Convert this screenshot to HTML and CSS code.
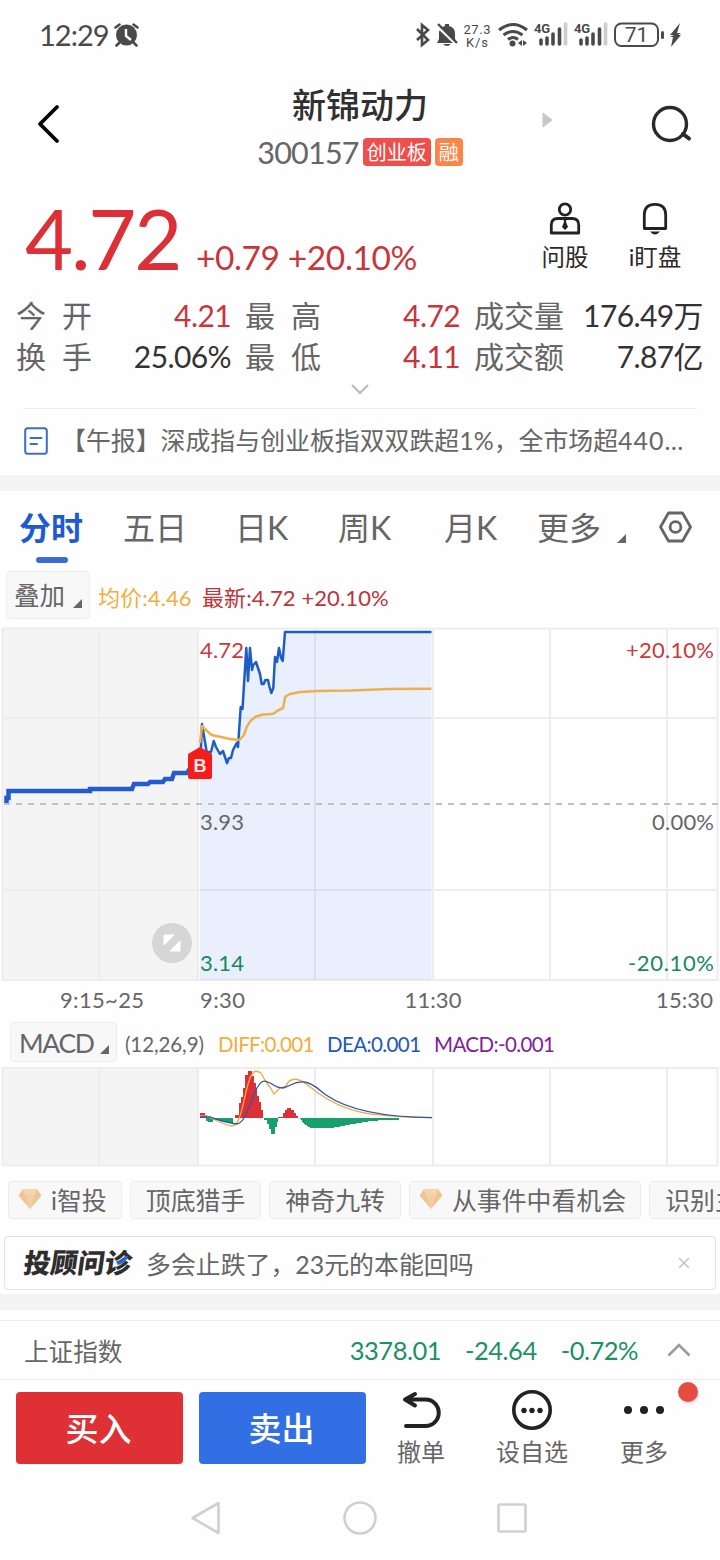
FILE: index.html
```html
<!DOCTYPE html>
<html lang="zh-CN">
<head>
    <meta charset="UTF-8">
    <meta name="viewport" content="width=device-width, initial-scale=1.0">
    <title>新锦动力 300157</title>
    <link rel="stylesheet" href="styles.css">
</head>
<body>
    <div class="status-bar">
        <span class="clock">12:29</span>
        <svg class="alarm" width="25" height="24" viewBox="0 0 25 24">
            <circle cx="12.500" cy="12" r="10.500" fill="#4a4a4a"/>
            <path d="M1.500 4.500 5.500 1.500M23.500 4.500l-4-3M5 20l-2.500 2.500M20 20l2.500 2.500" stroke="#4a4a4a" stroke-width="2.600" stroke-linecap="round"/>
            <path d="M12 6v7l5 4" fill="none" stroke="#fff" stroke-width="2.400"/>
        </svg>
        <div class="status-icons">
            <svg width="262" height="26" viewBox="0 0 262 26" fill="#4a4a4a">
                <path d="M2 7l11 11-6 5V3l6 5L2 18" fill="none" stroke="#4a4a4a" stroke-width="2.600"/>
                <path d="M24 17v-7q1-5 6-6V2h4v2q6 1 6 8v5l2 4H22zM28 22h8q-4 4-8 0z"/>
                <path d="M21 3l20 19" stroke="#fff" stroke-width="3"/>
                <path d="M23 2l19 19" stroke="#4a4a4a" stroke-width="2.400"/>
                <text class="net" x="62" y="11.500" text-anchor="middle" textLength="27">27.3</text>
                <text class="net" x="62" y="24.500" text-anchor="middle" textLength="22">K/s</text>
                <g fill="none" stroke="#4a4a4a" stroke-width="3">
                    <path d="M84 8q14-11 28 0M88.500 13q9.500-7 19 0M93 17.500q5-4 10 0"/>
                </g>
                <circle cx="97.500" cy="21.500" r="3"/>
                <path d="M103 21l4-3v6zM112 21l-4-3v6z"/>
                <g id="signal">
                    <text class="lte" x="119" y="11" textLength="16">4G</text>
                    <path d="M126 18v4M132 16v6M138 12v10M144.500 7v15" stroke="#4a4a4a" stroke-width="3.600" stroke-linecap="round"/>
                    <path d="M150.500 2v20" stroke="#ccc" stroke-width="3.600" stroke-linecap="round"/>
                </g>
                <use href="#signal" x="40"/>
                <rect x="200" y="1.500" width="43" height="22.500" rx="6.500" fill="none" stroke="#4a4a4a" stroke-width="2"/>
                <text class="battery" x="221.500" y="20" text-anchor="middle">71</text>
                <rect x="246" y="9" width="3" height="8" rx="1.500"/>
                <path d="M265 1l-10 12h4l-4 2h3l-2 10 10-12h-3l3-2h-4z"/>
            </svg>
        </div>
    </div>

    <div class="header">
        <svg class="back" width="24" height="40" viewBox="0 0 24 40"><path d="M21 3 4 20l17 17" fill="none" stroke="#000" stroke-width="3.800" stroke-linecap="round" stroke-linejoin="round"/></svg>
        <div class="stock">
            <h1>新锦动力</h1>
            <div class="code-row">
                <span class="code">300157</span>
                <span class="tag tag-red">创业板</span>
                <span class="tag tag-orange">融</span>
            </div>
        </div>
        <svg class="next" width="11" height="16" viewBox="0 0 11 16"><path d="M1 1v14l9-7z" fill="#c8c8c8" stroke="#c8c8c8" stroke-linejoin="round"/></svg>
        <svg class="search" width="42" height="40" viewBox="0 0 42 40"><circle cx="20" cy="20" r="16.500" fill="none" stroke="#2a2a2a" stroke-width="3.400"/><path d="M33 30l6 4.500" stroke="#2a2a2a" stroke-width="4" stroke-linecap="round"/></svg>
    </div>

    <div class="quote">
        <span class="price">4.72</span>
        <span class="change">+0.79 +20.10%</span>
        <div class="quick">
            <svg width="32" height="34" viewBox="0 0 32 34" fill="none" stroke="#222" stroke-width="2.800">
                <circle cx="16" cy="7.500" r="5.700"/>
                <path d="M2.300 31V23q0-6.500 6.500-6.500h14.400q6.500 0 6.500 6.500v8z" stroke-linejoin="round"/>
                <path d="M14.500 17h3l-.5 3 2 5-3 3-3-3 2-5z" fill="#222" stroke="none"/>
            </svg>
            <span>问股</span>
        </div>
        <div class="quick">
            <svg width="32" height="34" viewBox="0 0 32 34" fill="none" stroke="#222" stroke-width="2.800">
                <path d="M5.300 26.500V13q0-10.700 10.700-10.700T26.700 13v13.500z" stroke-linejoin="round"/>
                <path d="M11 29.500h10q-5 6-10 0z" fill="#222" stroke="none"/>
            </svg>
            <span>i盯盘</span>
        </div>
    </div>

    <div class="stats">
        <span class="label">今<i></i>开</span><span class="num red">4.21</span>
        <span class="label mid">最<i></i>高</span><span class="num red">4.72</span>
        <span class="label mid">成交量</span><span class="num">176.49万</span>
        <span class="label">换<i></i>手</span><span class="num">25.06%</span>
        <span class="label mid">最<i></i>低</span><span class="num red">4.11</span>
        <span class="label mid">成交额</span><span class="num">7.87亿</span>
    </div>
    <div class="expand">
        <svg width="20" height="11" viewBox="0 0 20 11"><path d="M2 1l8 8 8-8" fill="none" stroke="#bbb" stroke-width="2"/></svg>
    </div>

    <div class="news">
        <svg width="24" height="28" viewBox="0 0 24 28" fill="none" stroke="#3a6fc9" stroke-width="2"><rect x="1.200" y="1.200" width="21.600" height="25.600" rx="2.500"/><path d="M6.500 11h11M6.500 17h6.500" stroke-linecap="round"/></svg>
        <span class="news-text">【午报】深成指与创业板指双双跌超1%，全市场超<b>440…</b></span>
    </div>
    <div class="band"></div>

    <div class="tabs">
        <span class="tab active">分时</span>
        <span class="tab">五日</span>
        <span class="tab">日K</span>
        <span class="tab">周K</span>
        <span class="tab">月K</span>
        <span class="tab">更多</span>
        <svg class="corner" width="9" height="9" viewBox="0 0 9 9"><path d="M9 0v9H0z" fill="#666"/></svg>
        <svg width="34" height="32" viewBox="0 0 34 32" fill="none" stroke="#666" stroke-width="2.800"><path d="M9.500 2h14L31.500 16l-8 14h-14L1.500 16z" stroke-linejoin="round"/><circle cx="16.500" cy="16" r="5.400"/></svg>
    </div>

    <div class="legend">
        <span class="select">叠加<svg width="9" height="9" viewBox="0 0 9 9"><path d="M9 0v9H0z" fill="#666"/></svg></span>
        <span class="avg">均价:4.46</span>
        <span class="last">最新:4.72 +20.10%</span>
    </div>

    <!-- intraday price chart -->
    <svg class="chart" width="720" height="395" viewBox="0 627 720 395">
        <rect x="2" y="628" width="196" height="352" fill="#f4f4f4"/>
        <g class="grid">
            <path d="M2 628.500H718M2 980H718M4 718H718M4 890H718"/>
            <path d="M2.500 628v352M99 628v352M198 628v352M315 628v352M433 628v352M550 628v352M667 628v352M717.500 628v352"/>
        </g>
        <path class="area" d="M200 980V767L202 724 206.700 752 211 752 213.700 741 216 747 220 754 223 751 227 763 229 758 231 758 233 750 236.700 743 238 747 240.700 707 242.500 709 246.300 648 248 681 250 648 252 670 253.300 665 256 662 258 668 260 674 261.700 684 263.700 684 265.300 680 268 680 269.300 686 271.300 693 273.300 688 275 657 277 662 279 648 281 658 282.700 661 285 632H431.500V980z"/>
        <path class="dash" d="M4 804H718"/>
        <path class="pre" d="M6.500 803v-5h2v-7H90v-2h42l2-5h14l2-2h13l2-3h7l2-6h13l2-3h6"/>
        <text class="axis red" x="200" y="658" textLength="44">4.72</text>
        <text class="axis gray" x="200" y="830" textLength="44">3.93</text>
        <text class="axis green" x="200" y="971" textLength="44">3.14</text>
        <text class="axis red" x="714" y="658" text-anchor="end" textLength="88">+20.10%</text>
        <text class="axis gray" x="714" y="830" text-anchor="end" textLength="62">0.00%</text>
        <text class="axis green" x="714" y="971" text-anchor="end" textLength="86">-20.10%</text>
        <path class="line" d="M200 767L202 724 206.700 752 211 752 213.700 741 216 747 220 754 223 751 227 763 229 758 231 758 233 750 236.700 743 238 747 240.700 707 242.500 709 246.300 648 248 681 250 648 252 670 253.300 665 256 662 258 668 260 674 261.700 684 263.700 684 265.300 680 268 680 269.300 686 271.300 693 273.300 688 275 657 277 662 279 648 281 658 282.700 661 285 632H431.500"/>
        <path class="avg-line" d="M200 743L202 726 207 731 211.700 735 220 736.700 230 739 239.300 740 244 735 246.700 727 250.700 720.700 255 717 261.700 714.700 273.300 713.700 279 709.700 283 708.300 285.300 696.700 290 694 300 692 316.700 691 350 690.500 390 689 431.500 688.700"/>
        <path d="M188 754l12-7 12 7v23q0 2-2 2h-20q-2 0-2-2z" fill="#f71c1c"/>
        <text class="buy-mark" x="200" y="772" text-anchor="middle">B</text>
        <circle cx="172" cy="943" r="20" fill="#d6d6d6"/>
        <path d="M164 935h10l-10 10zM180 941v10h-10z" fill="#fff" stroke="#fff" stroke-linejoin="round"/>
        <text class="axis gray" x="60" y="1008" textLength="84">9:15~25</text>
        <text class="axis gray" x="200" y="1008" textLength="45">9:30</text>
        <text class="axis gray" x="433" y="1008" text-anchor="middle" textLength="57">11:30</text>
        <text class="axis gray" x="713" y="1008" text-anchor="end" textLength="57">15:30</text>
    </svg>

    <div class="macd-legend">
        <span class="select">MACD<svg width="9" height="9" viewBox="0 0 9 9"><path d="M9 0v9H0z" fill="#666"/></svg></span>
        <span class="params">(12,26,9)</span>
        <span class="diff">DIFF:0.001</span>
        <span class="dea">DEA:0.001</span>
        <span class="macd">MACD:-0.001</span>
    </div>

    <svg class="chart" width="720" height="100" viewBox="0 1067 720 100">
        <rect x="2" y="1068" width="196" height="98" fill="#f4f4f4"/>
        <g class="grid">
            <path d="M2 1068H718M2 1165.500H718"/>
            <path d="M2.500 1068v98M99 1068v98M198 1068v98M315 1068v98M433 1068v98M550 1068v98M667 1068v98M717.500 1068v98"/>
        </g>
        <g shape-rendering="crispEdges">
            <path fill="#dd3036" d="M200 1118v-5h5v2h2v3zM235 1118v-3h4v-12h2v-6h2v-9h2v-13h3v-4h4v5h2v7h2v6h1v7h2v6h2v8h2V1118zM278 1118v-1h5v-4h2v-3h2v-2h4v2h3v3h2v3h2v2z"/>
            <path fill="#18a06c" d="M206 1118v3h2v1h5v-2h6v1h6v1h6v1h2v-5zM264 1118v2h3v4h2v5h2v5h4v-7h2v-5h1v-4zM300 1118v1l2 1v2l4 3 5 3h19l8-1 9-2 12-2 12-2 14-1h14v-2z"/>
        </g>
        <path class="macd-line orange" d="M200 1116L206 1116 213 1119 222 1123 231 1126C240 1126 242 1108 247 1088S256 1070 261 1073L266 1082 270 1087 274 1094 280 1088 286 1086C290 1076 299 1079 305 1083L318 1093C345 1112 367 1117 432 1117.700"/>
        <path class="macd-line blue" d="M200 1117L210 1117 222 1121 236 1124C245 1124 249 1105 255 1092S264 1080 270 1083 276 1088 283 1088C291 1086 294 1081 304 1082S320 1091 326 1095 355 1117 432 1117.700"/>
    </svg>

    <div class="chips">
        <span class="chip chip-gem"><svg width="24" height="22" viewBox="0 0 24 22"><path d="M5 1h14l4.500 6.500L12 21 .5 7.500z" fill="#efc495"/><path d="M5 1l2 6.500h10L19 1z" fill="#f6d4ad"/><path d="M7 7.500h10L12 21z" fill="#f3cea4"/></svg>i智投</span>
        <span class="chip">顶底猎手</span>
        <span class="chip">神奇九转</span>
        <span class="chip chip-gem"><svg width="24" height="22" viewBox="0 0 24 22"><path d="M5 1h14l4.500 6.500L12 21 .5 7.500z" fill="#efc495"/><path d="M5 1l2 6.500h10L19 1z" fill="#f6d4ad"/><path d="M7 7.500h10L12 21z" fill="#f3cea4"/></svg>从事件中看机会</span>
        <span class="chip">识别主</span>
    </div>

    <div class="advisor">
        <span class="advisor-logo">投顾问诊<svg width="14" height="12" viewBox="0 0 14 12"><path d="M1 7l4-1 4-5h3l-1 4-3 3-5 2z" fill="#2866e0"/></svg></span>
        <span class="advisor-text">多会止跌了，23元的本能回吗</span>
        <svg width="12" height="12" viewBox="0 0 12 12"><path d="M1 1l10 10M11 1 1 11" stroke="#c4c4c4" stroke-width="1.600"/></svg>
    </div>
    <div class="band"></div>

    <div class="index-bar">
        <span class="index-name">上证指数</span>
        <span class="index-num">3378.01</span>
        <span class="index-num">-24.64</span>
        <span class="index-num">-0.72%</span>
        <svg width="24" height="14" viewBox="0 0 24 14"><path d="M1.500 12.500 12 2l10.500 10.500" fill="none" stroke="#999" stroke-width="2.600"/></svg>
    </div>

    <div class="actions">
        <span class="trade buy">买入</span>
        <span class="trade sell">卖出</span>
        <div class="action">
            <svg width="40" height="40" viewBox="0 0 40 40" fill="none" stroke="#222" stroke-width="4" stroke-linecap="round" stroke-linejoin="round"><path d="M14 4 4 9.500l10 6M5 9.500h19.500a13 13 0 0 1 0 26.500H5"/></svg>
            <span>撤单</span>
        </div>
        <div class="action">
            <svg width="40" height="40" viewBox="0 0 40 40" fill="#222"><circle cx="20" cy="20" r="18.200" fill="none" stroke="#222" stroke-width="3.600"/><circle cx="12" cy="20.500" r="2.700"/><circle cx="20" cy="20.500" r="2.700"/><circle cx="28" cy="20.500" r="2.700"/></svg>
            <span>设自选</span>
        </div>
        <div class="action">
            <svg width="40" height="40" viewBox="0 0 40 40" fill="#222"><circle cx="4" cy="20" r="4"/><circle cx="20" cy="20" r="4"/><circle cx="36" cy="20" r="4"/></svg>
            <span>更多</span>
            <i class="dot"></i>
        </div>
    </div>

    <div class="nav-bar">
        <svg width="34" height="36" viewBox="0 0 34 36"><path d="M27.500 3v30L1.500 18z"/></svg>
        <svg width="34" height="36" viewBox="0 0 34 36"><circle cx="17" cy="18" r="15.500"/></svg>
        <svg width="34" height="36" viewBox="0 0 34 36"><rect x="3.500" y="4.500" width="27" height="27" rx="1"/></svg>
    </div>
</body>
</html>
```

FILE: styles.css
```css
* {
    box-sizing: border-box;
}
body {
    margin: 0;
    width: 720px;
    height: 1560px;
    overflow: hidden;
    background-color: #fefefe;
    color: #666;
    font-family: Lato, "Noto Sans CJK SC", sans-serif;
    white-space: nowrap;
}
svg {
    display: block;
    flex: none;
}
.red {
    color: #cf3238;
    fill: #c83a40;
}
.gray {
    fill: #666;
}
.green {
    fill: #168a5c;
}

/* status bar */
.status-bar {
    display: flex;
    align-items: center;
    height: 70px;
    padding: 0 36px 0 39px;
    color: #4a4a4a;
}
.clock {
    width: 75px;
    font-size: 29px;
    line-height: 40px;
    letter-spacing: -1px;
}
.status-icons {
    margin-left: auto;
    margin-right: 7px;
}
.status-icons svg {
    overflow: visible;
}
.net {
    font: 13px Roboto, sans-serif;
}
.lte {
    font: bold 13px Roboto, sans-serif;
}
.battery {
    font: 21px Roboto, sans-serif;
    font-kerning: none;
}

/* title */
.header {
    display: grid;
    grid-template-columns: 24px 1fr 42px;
    height: 118px;
    padding: 14px 28px 0 36px;
    position: relative;
}
.back, .search {
    margin-top: 20px;
}
.stock {
    padding-left: 12px;
    text-align: center;
}
.stock h1 {
    margin: 0;
    padding-right: 2px;
    font-size: 34px;
    font-weight: 500;
    line-height: 41px;
    color: #303030;
}
.code-row {
    display: flex;
    justify-content: center;
    align-items: center;
    gap: 4px;
    height: 54px;
    padding-right: 2px;
}
.code {
    font-size: 30.5px;
    letter-spacing: -0.8px;
}
.tag {
    height: 28px;
    padding: 0 4px;
    border-radius: 4px;
    font-size: 20px;
    line-height: 28px;
    color: #fff;
}
.tag-red {
    background-color: #f04e4b;
}
.tag-orange {
    background-color: #fb8549;
}
.next {
    position: absolute;
    left: 542px;
    top: 42px;
}

/* price */
.quote {
    display: flex;
    height: 107px;
    padding-left: 25px;
}
.price {
    width: 171px;
    font-size: 83px;
    line-height: 101px;
    letter-spacing: -2.2px;
    color: #dd3036;
}
.change {
    width: 324px;
    padding-top: 47px;
    font-size: 33.5px;
    line-height: 44px;
    letter-spacing: -0.4px;
    color: #c9353b;
}
.quick {
    display: flex;
    flex-direction: column;
    align-items: center;
    width: 90px;
    padding-top: 14px;
    font-size: 23.5px;
    line-height: 42px;
    color: #2a2a2a;
}

/* day figures */
.stats {
    display: grid;
    grid-template-columns: 76px 139px 91px 138px 104px 1fr;
    grid-auto-rows: 41px;
    padding: 0 17px 0 16px;
    font-size: 30px;
    line-height: 40px;
}
.label i {
    display: inline-block;
    width: 16px;
}
.mid {
    padding-left: 14px;
}
.num {
    text-align: right;
    letter-spacing: -0.6px;
    color: #333;
}
.num.red {
    color: #c9353b;
}
.expand {
    display: flex;
    justify-content: center;
    height: 31px;
    margin: 0 23px;
    padding-top: 7px;
}

/* news */
.news {
    display: flex;
    align-items: center;
    gap: 13px;
    height: 67px;
    margin: 0 23px;
    padding-left: 1px;
    border-top: 1px solid #ededed;
}
.news-text {
    margin-top: -4px;
    font-size: 24.9px;
    line-height: 36px;
}
.news-text b {
    font-weight: normal;
    letter-spacing: 1px;
}
.news svg {
    margin-top: -2px;
}
.band {
    height: 16px;
    background-color: #f4f4f4;
}

/* chart tabs */
.tabs {
    display: grid;
    grid-template-columns: 104px 112px 103px 106px 93px 80px 42px 34px;
    height: 80px;
    padding: 12px 0 0 19px;
    font-size: 32px;
    line-height: 50px;
}
.tabs > svg {
    margin-top: 8px;
}
.tabs > .corner {
    margin-top: 31px;
}
.active {
    color: #1f5bd0;
    font-weight: bold;
}
.active::after {
    content: "";
    display: block;
    width: 32px;
    height: 6px;
    margin: 4px 0 0 17px;
    border-radius: 3px;
    background-color: #3a6cda;
}
.legend, .macd-legend {
    display: flex;
    align-items: center;
    font-size: 22px;
}
.legend {
    height: 48px;
    padding-left: 6px;
    margin-bottom: 8px;
}
.select {
    display: flex;
    justify-content: space-between;
    align-items: center;
    border: 1px solid #ededed;
    border-radius: 4px;
    background-color: #f8f8f8;
    font-size: 25.5px;
}
.select svg {
    margin-top: 14px;
}
.legend .select {
    width: 84px;
    height: 48px;
    padding: 0 7px 3px;
}
.legend .select svg {
    margin-top: 20px;
}
.avg, .last {
    padding-top: 2px;
    letter-spacing: 0.1px;
}
.avg {
    width: 104px;
    margin-left: 8px;
    color: #efae3d;
}
.last {
    color: #bd3439;
}

/* charts */
.grid path {
    fill: none;
    stroke: #ededed;
    stroke-width: 2;
}
.area {
    fill: #3c78f8;
    fill-opacity: 0.11;
}
.dash {
    stroke: #bfc1c4;
    stroke-width: 2;
    stroke-dasharray: 6 6;
}
.line {
    fill: none;
    stroke: #1f5dc6;
    stroke-width: 2.5;
    stroke-linejoin: round;
}
.pre {
    fill: none;
    stroke: #245bce;
    stroke-width: 4.5;
}
.avg-line {
    fill: none;
    stroke: #ecb04c;
    stroke-width: 2.5;
    stroke-linejoin: round;
}
.axis {
    font-size: 22px;
}
.buy-mark {
    font: bold 18px "Liberation Sans", sans-serif;
    fill: #ffe9e9;
}
.macd-legend {
    height: 40px;
    margin-bottom: 5px;
    padding-left: 10px;
    font-size: 20.5px;
    letter-spacing: -0.6px;
}
.macd-legend .select {
    width: 107px;
    height: 40px;
    padding: 0 7px 0 8px;
    font-size: 26.5px;
    letter-spacing: -1.3px;
}
.macd-legend > span {
    padding-top: 3px;
}
.macd-legend .select {
    padding-top: 1px;
}
.params {
    width: 93px;
    margin-left: 8px;
    letter-spacing: -0.1px;
}
.diff {
    width: 109px;
    color: #efae3d;
}
.dea {
    width: 107px;
    color: #2258b8;
}
.macd {
    color: #7f239c;
}
.macd-line {
    fill: none;
    stroke-width: 1.3;
}
.orange {
    stroke: #f0a93b;
}
.blue {
    stroke: #2b57b0;
}

/* strategy chips */
.chips {
    display: flex;
    gap: 8px;
    margin-top: 14px;
    padding-left: 8px;
    overflow: hidden;
}
.chip {
    flex: none;
    height: 38px;
    padding: 0 15px;
    border: 1px solid #ececec;
    border-radius: 4px;
    background-color: #f8f8f8;
    font-size: 24.9px;
    line-height: 37px;
}
.chip-gem {
    display: flex;
    gap: 9px;
    padding-left: 9px;
    padding-right: 14px;
}
.chip-gem svg {
    margin-top: 6px;
}

/* advisor strip */
.advisor {
    display: flex;
    align-items: center;
    height: 54px;
    margin: 17px 4px 4px;
    padding: 0 25px 0 19px;
    border: 1px solid #e4e4e4;
    border-radius: 4px;
}
.advisor-logo {
    position: relative;
    width: 122px;
    font-size: 27px;
    font-weight: 900;
    line-height: 40px;
    color: #2e2e2e;
    transform: skewX(-8deg);
}
.advisor-logo svg {
    position: absolute;
    left: 91px;
    top: 12px;
}
.advisor-text {
    padding-top: 2px;
    font-size: 24.9px;
    line-height: 40px;
}
.advisor > svg {
    margin-left: auto;
}

/* index */
.index-bar {
    display: flex;
    align-items: center;
    height: 60px;
    margin-top: 10px;
    padding: 0 29px 0 24px;
    border-top: 1px solid #ededed;
    border-bottom: 1px solid #ededed;
    font-size: 24.6px;
}
.index-name {
    margin-right: auto;
}
.index-num {
    margin-right: 24px;
    font-size: 25.5px;
    letter-spacing: -0.5px;
    color: #1b9165;
}
.index-bar svg {
    margin-left: 5px;
}

/* bottom buttons */
.actions {
    display: flex;
    height: 96px;
    padding: 12px 0 0 16px;
}
.trade {
    width: 167px;
    height: 72px;
    margin-right: 16px;
    padding-right: 2px;
    border-radius: 4px;
    font-size: 33px;
    font-weight: 500;
    line-height: 73px;
    text-align: center;
    color: #fff;
}
.buy {
    background-color: #df3035;
}
.sell {
    background-color: #326fe5;
}
.action {
    display: flex;
    flex-direction: column;
    align-items: center;
    position: relative;
    width: 112px;
    margin-top: -2px;
    font-size: 24px;
    line-height: 43px;
}
.action:nth-child(3) {
    width: 110px;
    margin-left: -16px;
}
.dot {
    position: absolute;
    left: 90px;
    top: -8px;
    width: 20px;
    height: 20px;
    border-radius: 50%;
    background-color: #e54d42;
    box-shadow: 1px 2px 3px rgba(0,0,0,0.15);
}
.nav-bar {
    display: flex;
    justify-content: center;
    gap: 118px;
    padding-top: 24px;
}
.nav-bar svg {
    fill: none;
    stroke: #d0d0d0;
    stroke-width: 2.6;
    stroke-linejoin: round;
}
```
